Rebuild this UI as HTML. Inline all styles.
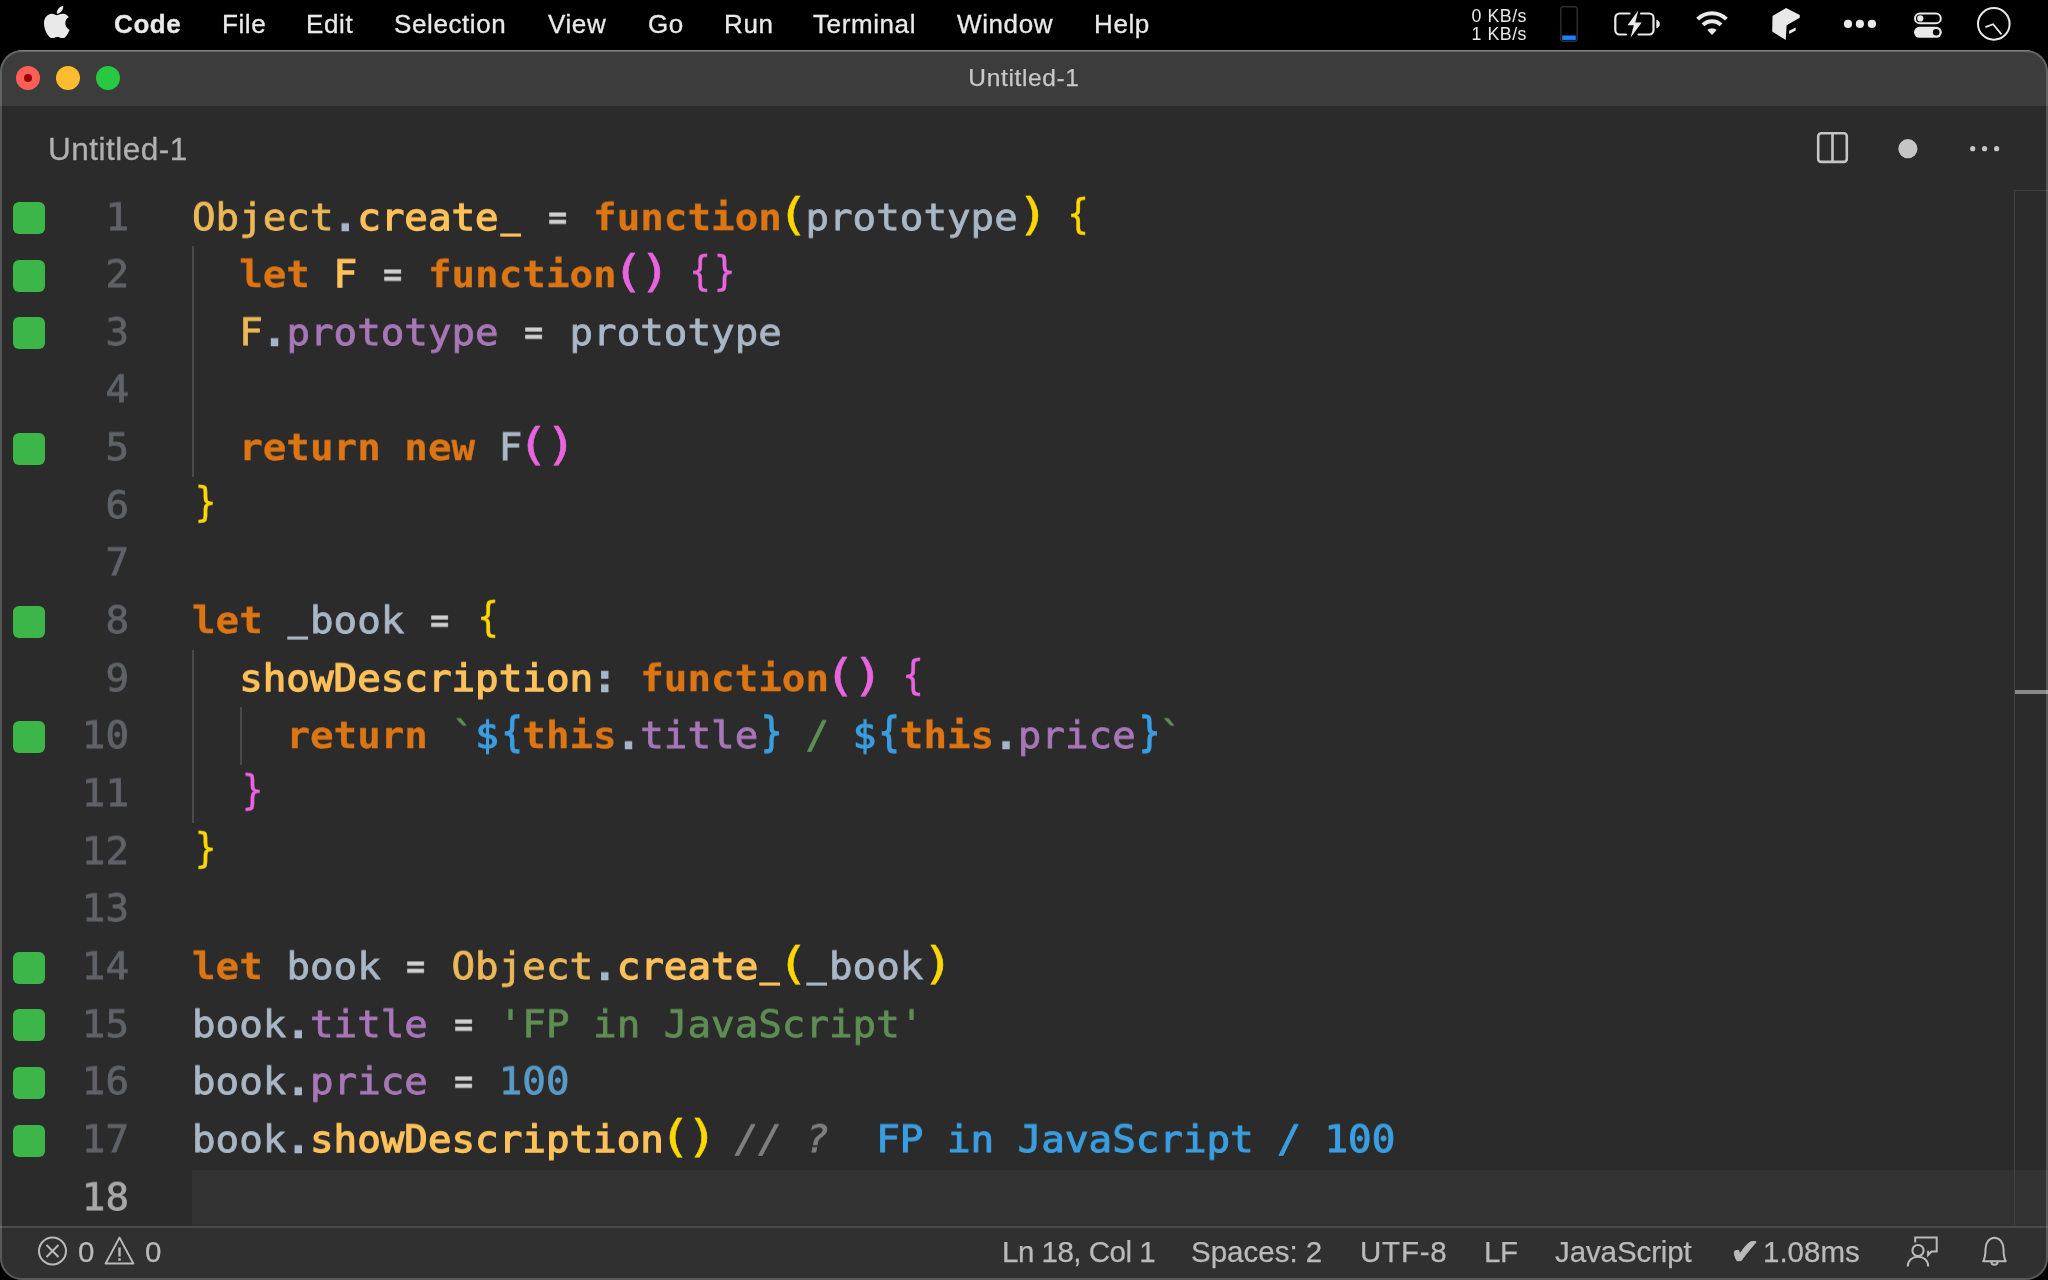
<!DOCTYPE html>
<html lang="en">
<head>
<meta charset="utf-8">
<title>Untitled-1</title>
<style>
*{box-sizing:border-box;margin:0;padding:0}
html,body{width:2048px;height:1280px;overflow:hidden;background:#000}
body{position:relative;font-family:"Liberation Sans",sans-serif;color:#ccc}
.abs{position:absolute}
.mi,.si,#net,#title,#tabtitle{will-change:transform}
/* menubar */
#menubar{position:absolute;left:0;top:0;width:2048px;height:50px;background:#000}
#menubar .mi{position:absolute;top:8px;height:32px;line-height:32px;font-size:26px;color:#e9e9e9;white-space:nowrap;letter-spacing:.6px;-webkit-text-stroke:.3px}
#menubar .mi.b{font-weight:bold}
#net{position:absolute;left:1467px;top:7px;width:60px;font-size:17.8px;line-height:18.3px;letter-spacing:.5px;color:#e9e9e9;text-align:right;white-space:nowrap}
/* window */
#win{position:absolute;left:0;top:50px;width:2048px;height:1230px;border-radius:22px;background:#2b2b2b;overflow:hidden}
#winborder{position:absolute;left:0;top:50px;width:2048px;height:1230px;border-radius:22px;border:2px solid rgba(255,255,255,.2);pointer-events:none}
#titlebar{position:absolute;left:0;top:0;width:2048px;height:56px;background:#3c3c3c}
#title{position:absolute;left:0;top:0;width:2048px;height:56px;line-height:56px;text-align:center;font-size:24.5px;color:#c8c8c8;letter-spacing:.64px;-webkit-text-stroke:.25px}
.tl{position:absolute;top:16px;width:24px;height:24px;border-radius:50%}
#tabtitle{position:absolute;left:47.500px;top:79px;height:40px;line-height:40px;font-size:31.6px;color:#b0b0b0;white-space:nowrap;letter-spacing:.45px;-webkit-text-stroke:.3px}
/* editor */
#editor{position:absolute;left:0;top:0;width:2048px;height:1176px}
.ln{position:absolute;left:0;width:129px;height:58px;line-height:58px;text-align:right;color:#5f6368;white-space:pre}
.ln.act{color:#a8a8a8}
.cl{position:absolute;left:192px;height:58px;line-height:58px;white-space:pre;color:#a9b7c6}
.mono{font-family:"DejaVu Sans Mono","Liberation Mono",monospace;font-size:39.2px;letter-spacing:0px;-webkit-text-stroke:0.8px;transform:scaleY(.95);transform-origin:0 42.750px;will-change:transform}
.gs{position:absolute;left:13px;width:32px;height:32px;border-radius:6px;background:#3cb648}
.guide{position:absolute;width:2px;background:#4a4a4a}
#curline{position:absolute;left:192px;top:1119.500px;width:1856px;height:57px;background:#323232}
#ruler{position:absolute;left:2014px;top:140px;width:34px;height:1035px;border-left:1px solid #414141;border-top:1px solid #414141}
#rulermark{position:absolute;left:2015px;top:640px;width:33px;height:4px;background:#8a8a8a}
/* syntax */
.k{color:#dc7514;font-weight:bold;-webkit-text-stroke:0.3px}
.o{color:#ecb858}
.f{color:#ffc25b;-webkit-text-stroke:1.3px}
.p{color:#a4b6c8;-webkit-text-stroke:2.6px}
.e{color:#d0d0d0;display:inline-block;transform:scaleX(.8)}
.v{color:#a9b7c6}
.m{color:#a877b8}
.b1,.b2,.b3{-webkit-text-stroke:.5px;display:inline-block;transform:scale(.95,1.1);transform-origin:50% 50px}
.pl{transform:translate(-1px,-2.5px) scale(1.37,1.17);transform-origin:50% 31px}
.prr{transform:translate(3px,-2.5px) scale(1.37,1.17);transform-origin:50% 31px}
.bl{transform:translate(1.3px,-1px) scale(.9,1.1)}
.brr{transform:translate(1.8px,-1px) scale(.9,1.1)}
.b3{-webkit-text-stroke:1.2px}
.dl{transform:none}
.u{display:inline-block;transform:translateY(-3px) scaleX(.82);-webkit-text-stroke:1.7px}
.b1{color:#ffd700}
.b2{color:#e965e0}
.b3{color:#3a9ee0}
.s{color:#5f8e54}
.n{color:#5a9ac7}
.c{color:#7f7f7f;font-style:italic}
.q{color:#3a9ee0;-webkit-text-stroke:1.1px}
/* statusbar */
#status{position:absolute;left:0;top:1176px;width:2048px;height:54px;background:#303030;border-top:2px solid #4a4a4a}
#status .si{position:absolute;top:6.500px;-webkit-text-stroke:.25px;height:34px;line-height:34px;font-size:29.5px;color:#bababa;white-space:nowrap}
</style>
</head>
<body>
<div id="menubar">
  <div class="mi b" style="left:114px">Code</div>
  <div class="mi" style="left:222px">File</div>
  <div class="mi" style="left:306px">Edit</div>
  <div class="mi" style="left:394px">Selection</div>
  <div class="mi" style="left:548px">View</div>
  <div class="mi" style="left:648px">Go</div>
  <div class="mi" style="left:724px">Run</div>
  <div class="mi" style="left:813px">Terminal</div>
  <div class="mi" style="left:957px">Window</div>
  <div class="mi" style="left:1094px">Help</div>
  <svg class="abs" style="left:44px;top:5.5px" width="25.6" height="32.4" viewBox="4 32 377 449" preserveAspectRatio="none"><path fill="#e9e9e9" d="M318.7 268.7c-.2-36.7 16.4-64.4 50-84.800-18.800-26.900-47.200-41.700-84.700-44.600-35.500-2.800-74.300 20.700-88.500 20.700-15 0-49.400-19.700-76.400-19.700C63.300 141.200 4 184.800 4 273.500q0 39.300 14.400 81.200c12.800 36.700 59 126.700 107.200 125.200 25.200-.6 43-17.900 75.800-17.900 31.800 0 48.300 17.900 76.400 17.900 48.600-.7 90.400-82.500 102.600-119.300-65.200-30.700-61.700-90-61.700-91.900zm-56.600-164.200c27.300-32.400 24.800-61.900 24-72.500-24.100 1.400-52 16.400-67.900 34.900-17.500 19.800-27.800 44.300-25.600 71.900 26.100 2 49.900-11.400 69.500-34.300z"/></svg>
  <svg class="abs" style="left:1556px;top:3px" width="26" height="42" viewBox="0 0 26 42">
    <rect x="4.75" y="3.75" width="16.5" height="34.500" rx="2.500" fill="#000" stroke="#2c2c2e" stroke-width="1.500"/>
    <rect x="6.200" y="32.500" width="13.600" height="4.400" fill="#1a84ff"/>
  </svg>
  <svg class="abs" style="left:1610px;top:8px" width="54" height="32" viewBox="0 0 54 32" fill="none">
    <path d="M19.500 5.500H9.500a4.200 4.200 0 0 0-4.200 4.200v12.600a4.200 4.200 0 0 0 4.200 4.200h6.500M31 5.500h8.300a4.200 4.200 0 0 1 4.200 4.200v12.600a4.200 4.200 0 0 1-4.200 4.200H28.500" stroke="#e9e9e9" stroke-width="2.200" stroke-linecap="round"/>
    <path d="M46.300 11.800c2.300.5 3.500 2 3.500 4.200s-1.200 3.700-3.500 4.200z" fill="#e9e9e9"/>
    <path d="M28.300 2.200 17.500 17.300h6.300l-3.300 12.500 11.200-15.400h-6.400z" fill="#e9e9e9"/>
  </svg>
  <svg class="abs" style="left:1692px;top:8px" width="40" height="30" viewBox="0 0 40 30" fill="none" stroke="#e9e9e9" stroke-linecap="butt">
    <path d="M5.600 11.200a20.400 20.400 0 0 1 28.800 0" stroke-width="4"/>
    <path d="M11 16.900a12.700 12.700 0 0 1 18 0" stroke-width="4"/>
    <path d="M20 27 15.300 22.100a6.600 6.600 0 0 1 9.400 0z" fill="#e9e9e9" stroke="none"/>
  </svg>
  <svg class="abs" style="left:1770px;top:6px" width="32" height="36" viewBox="0 0 32 36">
    <path fill="#e9e9e9" d="M2.500 10 16.100 2 29.800 9.100v2.600L16.600 19.200 15.800 34 2.200 25.600z"/>
    <path fill="#e9e9e9" d="M19.100 24.800 25.700 21.500v3L19.100 28z"/>
  </svg>
  <svg class="abs" style="left:1840px;top:16px" width="40" height="16" viewBox="0 0 40 16" fill="#e9e9e9">
    <circle cx="8" cy="7.900" r="4.100"/><circle cx="19.900" cy="7.900" r="4.100"/><circle cx="31.900" cy="7.900" r="4.100"/>
  </svg>
  <svg class="abs" style="left:1910px;top:10px" width="36" height="30" viewBox="0 0 36 30">
    <rect x="5" y="3.500" width="25.800" height="9.800" rx="4.900" fill="none" stroke="#e9e9e9" stroke-width="2"/>
    <circle cx="10.300" cy="8.400" r="3.100" fill="#e9e9e9"/>
    <rect x="4" y="16.800" width="27.800" height="11" rx="5.500" fill="#e9e9e9"/>
    <circle cx="26.200" cy="22.300" r="3.300" fill="#000"/>
  </svg>
  <svg class="abs" style="left:1974px;top:4px" width="40" height="40" viewBox="0 0 40 40" fill="none" stroke="#e9e9e9">
    <circle cx="19.800" cy="19.900" r="15.800" stroke-width="2"/>
    <path d="M11.400 23.100 19.100 20.200 27.500 30.400" stroke-width="1.800" stroke-linejoin="miter"/>
  </svg>
  <div id="net">0 KB/s<br>1 KB/s</div>
</div>
<div id="win">
  <div id="titlebar"></div>
  <div id="title">Untitled-1</div>
  <div class="tl" style="left:16px;background:#ff5f57"></div>
  <div class="tl" style="left:56px;background:#febc2e"></div>
  <div class="tl" style="left:96px;background:#28c840"></div>
  <div class="abs" style="left:24px;top:24px;width:8px;height:8px;border-radius:50%;background:#990000"></div>
  <div id="tabtitle">Untitled-1</div>
  <svg class="abs" style="left:1810px;top:76px" width="200" height="44" viewBox="0 0 200 44">
    <rect x="8.200" y="7.300" width="28.600" height="28.600" rx="3" fill="none" stroke="#c5c5c5" stroke-width="2.600"/>
    <rect x="21.200" y="7.300" width="2.600" height="28.600" fill="#c5c5c5"/>
    <circle cx="97.900" cy="22.700" r="9.600" fill="#c5c5c5"/>
    <circle cx="162.700" cy="22.700" r="2.600" fill="#c5c5c5"/><circle cx="174.600" cy="22.700" r="2.600" fill="#c5c5c5"/><circle cx="186.600" cy="22.700" r="2.600" fill="#c5c5c5"/>
  </svg>
  <div id="editor">
    <div id="curline"></div>
    <div id="ruler"></div>
    <div id="rulermark"></div>
    <div class="guide" style="left:192px;top:196.160px;height:230.640px"></div>
    <div class="guide" style="left:192px;top:599.780px;height:172.980px"></div>
    <div class="guide" style="left:240px;top:657.440px;height:57.660px"></div>
    <div class="gs" style="top:152.00px"></div>
    <div class="ln mono" style="top:137.50px">1</div>
    <div class="cl mono" style="top:137.50px"><span class="o">Object</span><span class="p">.</span><span class="f">create<span class="u">_</span></span> <span class="e">=</span> <span class="k">function</span><span class="b1 pl">(</span><span class="v">prototype</span><span class="b1 prr">)</span> <span class="b1 bl">{</span></div>
    <div class="gs" style="top:209.66px"></div>
    <div class="ln mono" style="top:195.16px">2</div>
    <div class="cl mono" style="top:195.16px">  <span class="k">let</span> <span class="f">F</span> <span class="e">=</span> <span class="k">function</span><span class="b2 pl">(</span><span class="b2 prr">)</span> <span class="b2 bl">{</span><span class="b2 brr">}</span></div>
    <div class="gs" style="top:267.32px"></div>
    <div class="ln mono" style="top:252.82px">3</div>
    <div class="cl mono" style="top:252.82px">  <span class="o">F</span><span class="p">.</span><span class="m">prototype</span> <span class="e">=</span> <span class="v">prototype</span></div>
    <div class="ln mono" style="top:310.48px">4</div>
    <div class="gs" style="top:382.64px"></div>
    <div class="ln mono" style="top:368.14px">5</div>
    <div class="cl mono" style="top:368.14px">  <span class="k">return</span> <span class="k">new</span> <span class="v">F</span><span class="b2 pl">(</span><span class="b2 prr">)</span></div>
    <div class="ln mono" style="top:425.80px">6</div>
    <div class="cl mono" style="top:425.80px"><span class="b1 brr">}</span></div>
    <div class="ln mono" style="top:483.46px">7</div>
    <div class="gs" style="top:555.62px"></div>
    <div class="ln mono" style="top:541.12px">8</div>
    <div class="cl mono" style="top:541.12px"><span class="k">let</span> <span class="v"><span class="u">_</span>book</span> <span class="e">=</span> <span class="b1 bl">{</span></div>
    <div class="ln mono" style="top:598.78px">9</div>
    <div class="cl mono" style="top:598.78px">  <span class="f">showDescription</span><span class="p">:</span> <span class="k">function</span><span class="b2 pl">(</span><span class="b2 prr">)</span> <span class="b2 bl">{</span></div>
    <div class="gs" style="top:670.94px"></div>
    <div class="ln mono" style="top:656.44px">10</div>
    <div class="cl mono" style="top:656.44px">    <span class="k">return</span> <span class="s">`</span><span class="b3 dl">$</span><span class="b3 bl">{</span><span class="k">this</span><span class="p">.</span><span class="m">title</span><span class="b3 brr">}</span><span class="s"> / </span><span class="b3 dl">$</span><span class="b3 bl">{</span><span class="k">this</span><span class="p">.</span><span class="m">price</span><span class="b3 brr">}</span><span class="s">`</span></div>
    <div class="ln mono" style="top:714.10px">11</div>
    <div class="cl mono" style="top:714.10px">  <span class="b2 brr">}</span></div>
    <div class="ln mono" style="top:771.76px">12</div>
    <div class="cl mono" style="top:771.76px"><span class="b1 brr">}</span></div>
    <div class="ln mono" style="top:829.42px">13</div>
    <div class="gs" style="top:901.58px"></div>
    <div class="ln mono" style="top:887.08px">14</div>
    <div class="cl mono" style="top:887.08px"><span class="k">let</span> <span class="v">book</span> <span class="e">=</span> <span class="o">Object</span><span class="p">.</span><span class="f">create<span class="u">_</span></span><span class="b1 pl">(</span><span class="v"><span class="u">_</span>book</span><span class="b1 prr">)</span></div>
    <div class="gs" style="top:959.24px"></div>
    <div class="ln mono" style="top:944.74px">15</div>
    <div class="cl mono" style="top:944.74px"><span class="v">book</span><span class="p">.</span><span class="m">title</span> <span class="e">=</span> <span class="s">'FP in JavaScript'</span></div>
    <div class="gs" style="top:1016.90px"></div>
    <div class="ln mono" style="top:1002.40px">16</div>
    <div class="cl mono" style="top:1002.40px"><span class="v">book</span><span class="p">.</span><span class="m">price</span> <span class="e">=</span> <span class="n">100</span></div>
    <div class="gs" style="top:1074.56px"></div>
    <div class="ln mono" style="top:1060.06px">17</div>
    <div class="cl mono" style="top:1060.06px"><span class="v">book</span><span class="p">.</span><span class="f">showDescription</span><span class="b1 pl">(</span><span class="b1 prr">)</span> <span class="c">// ?</span>  <span class="q">FP in JavaScript / 100</span></div>
    <div class="ln mono act" style="top:1117.72px">18</div>
  </div>
  <div id="status">
    <svg class="abs" style="left:36px;top:6px" width="104" height="36" viewBox="0 0 104 36" fill="none" stroke="#bababa" stroke-width="2">
      <circle cx="16.500" cy="17" r="13.500"/>
      <path d="M10.500 11 22.500 23M22.500 11 10.500 23"/>
      <path d="M83.500 3.600 69.600 29.600h27.800z" stroke-linejoin="round"/>
      <path d="M83.500 13.500v9" stroke-width="2.400"/><path d="M83.500 24.200v2.600" stroke-width="2.400"/>
    </svg>
    <svg class="abs" style="left:1900px;top:5.500px" width="44" height="40" viewBox="0 0 44 40" fill="none" stroke="#bababa" stroke-width="2">
      <circle cx="18" cy="16.500" r="5.600"/>
      <path d="M7.800 32.500c0-6 4.500-9.800 10.200-9.800s10.200 3.800 10.200 9.800"/>
      <path d="M15.200 8.500V3.500h21.500v14h-5.200l-3.400 3.600v-4.400"/>
    </svg>
    <svg class="abs" style="left:1974px;top:6px" width="40" height="40" viewBox="0 0 40 40" fill="none" stroke="#bababa" stroke-width="2">
      <path d="M9.200 27.200c2.200-3.700 2.300-6.400 2.300-12.200 0-6.600 4.100-11.300 9-11.300s9 4.700 9 11.300c0 5.800.1 8.500 2.300 12.200z" stroke-linejoin="round"/>
      <path d="M17.300 27.600c0 2 1.400 3.200 3.200 3.200s3.200-1.200 3.200-3.200"/>
    </svg>
    <div class="si" style="left:77.500px">0</div>
    <div class="si" style="left:144.500px">0</div>
    <div class="si" style="left:1001.500px;letter-spacing:-.5px">Ln 18, Col 1</div>
    <div class="si" style="left:1191px">Spaces: 2</div>
    <div class="si" style="left:1360px;letter-spacing:.8px">UTF-8</div>
    <div class="si" style="left:1483.500px;letter-spacing:-.5px">LF</div>
    <div class="si" style="left:1555px;letter-spacing:-.1px">JavaScript</div>
    <div class="si" style="left:1729.500px;top:6.500px;font-size:36px;-webkit-text-stroke:.7px;font-family:'DejaVu Sans',sans-serif">✔</div>
    <div class="si" style="left:1763px">1.08ms</div>
  </div>
</div>
<div id="winborder"></div>
<div class="abs" style="left:18px;top:50px;width:2012px;height:1px;background:rgba(255,255,255,.2)"></div>
</body>
</html>
